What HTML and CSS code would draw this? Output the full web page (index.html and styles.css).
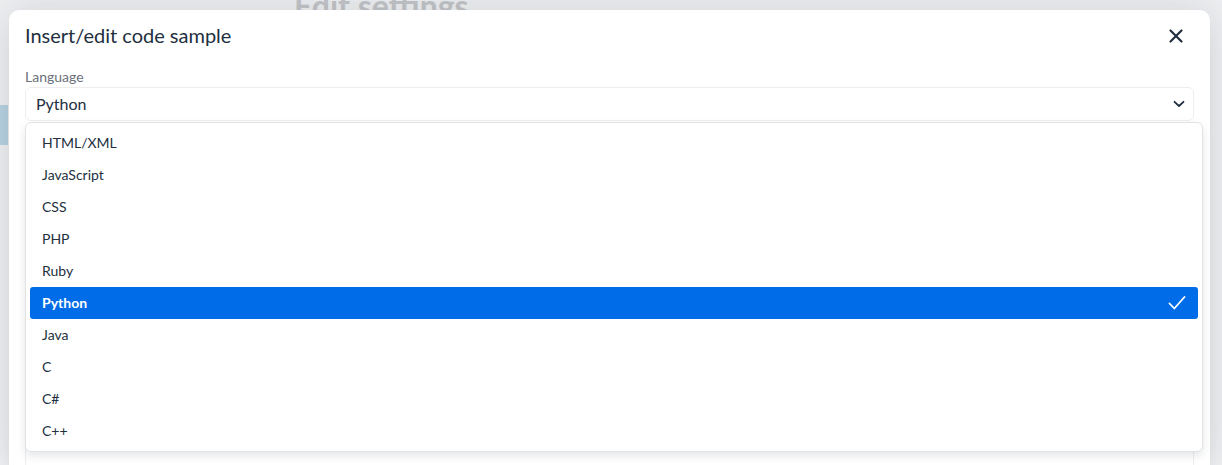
FILE: index.html
```html
<!DOCTYPE html>
<html lang="en">
<head>
  <meta charset="UTF-8">
  <title>Insert/edit code sample</title>
  <link rel="stylesheet" href="styles.css">
</head>
<body>
<div class="page">
  <div class="page-side"></div>
  <h1 class="page-title">Edit settings</h1>
</div>

<div class="dialog">
  <div class="dialog-head">
    <div class="dialog-title">Insert/edit code sample</div>
    <button class="dialog-close" type="button">
      <svg width="24" height="24" viewBox="0 0 24 24"><path d="M6.5 6.5l11 11M17.5 6.5l-11 11" stroke="#222f3e" stroke-width="2.2" stroke-linecap="round" fill="none"/></svg>
    </button>
  </div>
  <div class="dialog-body">
    <div class="field-label">Language</div>
    <div class="select">
      <span>Python</span>
      <svg width="12" height="8" viewBox="0 0 12 8"><path d="M1.5 1.8l4.5 4.2 4.5-4.2" stroke="#222f3e" stroke-width="1.8" stroke-linecap="round" stroke-linejoin="round" fill="none"/></svg>
    </div>
    <div class="code-area"></div>

    <ul class="menu">
      <li>HTML/XML</li>
      <li>JavaScript</li>
      <li>CSS</li>
      <li>PHP</li>
      <li>Ruby</li>
      <li class="active">Python
        <svg width="18" height="14" viewBox="0 0 18 14"><path d="M1.5 7.5l4.8 5 10.2-11.5" stroke="#fff" stroke-width="1.8" stroke-linecap="round" stroke-linejoin="round" fill="none"/></svg>
      </li>
      <li>Java</li>
      <li>C</li>
      <li>C#</li>
      <li>C++</li>
    </ul>
  </div>
</div>
</body>
</html>
```

FILE: styles.css
```css
*{
  margin: 0;
  padding: 0;
  box-sizing: border-box;
}
body{
  background: #eff0f2;
  font-family: Lato, "Open Sans", sans-serif;
  color: #222f3e;
  overflow: hidden;
  height: 465px;
}
.page{
  display: flex;
  height: 465px;
}
.page-side{
  width: 8px;
  height: 40px;
  margin-top: 105px;
  background: #b9d3e3;
}
.page-title{
  margin: -14px 0 0 286px;
  font-size: 32px;
  font-weight: bold;
  color: #c3c5c8;
  white-space: nowrap;
}

/* modal */
.dialog{
  position: absolute;
  top: 10px;
  left: 9px;
  width: 1201px;
  height: 455px;
  overflow: hidden;
  background: #fff;
  border-radius: 10px 10px 0 0;
  box-shadow: 0 16px 16px -10px rgba(34,47,62,.15), 0 0 40px 1px rgba(34,47,62,.15);
}
.dialog-head{
  height: 52px;
  padding: 0 16px;
  display: flex;
  align-items: center;
  justify-content: space-between;
}
.dialog-title{
  font-size: 20px;
  line-height: 26px;
  padding-bottom: 2px;
}
.dialog-close{
  width: 24px;
  height: 24px;
  margin-right: 6px;
  border: 0;
  background: none;
  display: flex;
}
.dialog-body{
  position: relative;
  padding: 6px 16px 0;
}
.field-label{
  font-size: 14px;
  line-height: 18px;
  color: #6b7079;
  margin-bottom: 1px;
}
.select{
  height: 34px;
  border: 1px solid #eeeeee;
  border-radius: 6px;
  padding: 0 8px 2px 10px;
  display: flex;
  align-items: center;
  justify-content: space-between;
  font-size: 16px;
}
.select svg{
  margin-top: 2px;
}
.code-area{
  height: 360px;
  margin-top: 10px;
  border: 1px solid #eeeeee;
  border-radius: 6px;
}

/* dropdown */
.menu{
  position: absolute;
  top: 60px;
  left: 16px;
  width: 1178px;
  padding: 4px;
  list-style: none;
  background: #fff;
  border: 1px solid #e3e3e3;
  border-radius: 6px;
  box-shadow: 0 4px 8px 0 rgba(34,47,62,.12);
}
.menu li{
  height: 32px;
  padding: 0 12px 2px;
  display: flex;
  align-items: center;
  justify-content: space-between;
  font-size: 14px;
  border-radius: 3px;
}
.menu li svg{
  margin-top: 2px;
}
.menu li.active{
  background: #006ce7;
  color: #fff;
  font-weight: bold;
}
```
